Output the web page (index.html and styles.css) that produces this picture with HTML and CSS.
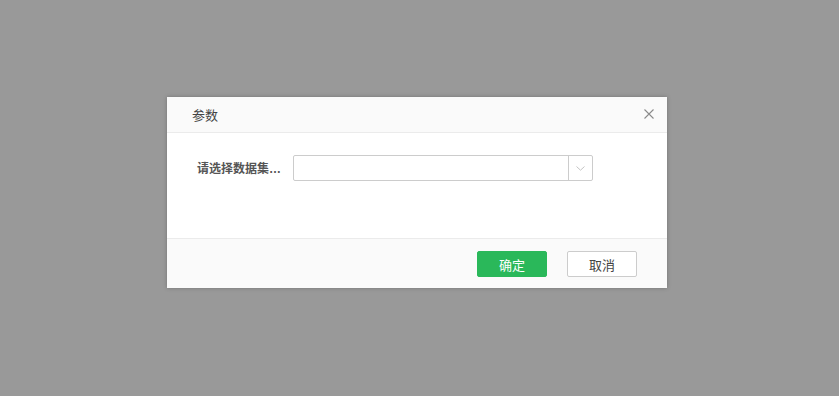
FILE: index.html
```html
<!DOCTYPE html>
<html lang="zh-CN">
<head>
<meta charset="utf-8">
<title>参数</title>
<link rel="stylesheet" href="styles.css">
</head>
<body>
<div class="overlay">
  <div class="dialog">
    <div class="dialog-header">
      <span class="dialog-title">参数</span>
      <span class="dialog-close" aria-label="关闭">
        <svg width="10" height="10" viewBox="0 0 10 10"><path d="M0.5 0.5 L9.5 9.5 M9.5 0.5 L0.5 9.5" stroke="#8a8a8a" stroke-width="1.1" fill="none"/></svg>
      </span>
    </div>
    <div class="dialog-body">
      <div class="form-row">
        <label class="form-label">请选择数据集…</label>
        <div class="select">
          <div class="select-value"></div>
          <div class="select-arrow">
            <svg width="9" height="5" viewBox="0 0 9 5"><path d="M0.5 0.5 L4.5 4.2 L8.5 0.5" stroke="#c4c4c4" stroke-width="1" fill="none"/></svg>
          </div>
        </div>
      </div>
    </div>
    <div class="dialog-footer">
      <button class="btn btn-primary">确定</button>
      <button class="btn btn-default">取消</button>
    </div>
  </div>
</div>
</body>
</html>
```
FILE: styles.css
```css
html, body {
  margin: 0;
  padding: 0;
  height: 100%;
}
body {
  background: #999999;
  font-family: "Liberation Sans", "Noto Sans CJK SC", sans-serif;
  font-size: 13px;
  color: #333;
}
.overlay {
  padding-top: 97px;
  padding-left: 167px;
}
.dialog {
  width: 500px;
  background: #fff;
  box-shadow: 0 0 4px rgba(0, 0, 0, 0.25);
}
.dialog-header {
  height: 35px;
  background: #fafafa;
  border-bottom: 1px solid #ebebeb;
  display: flex;
  align-items: center;
  justify-content: space-between;
  padding: 0 13px 0 25px;
}
.dialog-title {
  font-size: 13px;
  color: #444;
}
.dialog-close {
  display: flex;
  width: 10px;
  height: 10px;
  margin-top: -1px;
}
.dialog-body {
  height: 106px;
  padding: 22px 0 0 30px;
  box-sizing: border-box;
  border-bottom: 1px solid #ebebeb;
}
.form-row {
  display: flex;
  align-items: center;
}
.form-label {
  width: 96px;
  font-size: 12px;
  font-weight: bold;
  color: #555;
  margin-top: -2px;
}
.select {
  width: 300px;
  height: 26px;
  box-sizing: border-box;
  border: 1px solid #cccccc;
  border-radius: 2px;
  display: flex;
}
.select-value {
  flex: 1;
}
.select-arrow {
  width: 23px;
  border-left: 1px solid #cccccc;
  display: flex;
  align-items: center;
  justify-content: center;
  padding-top: 1px;
}
.dialog-footer {
  height: 49px;
  background: #fafafa;
  display: flex;
  align-items: center;
  justify-content: flex-end;
  gap: 20px;
  padding: 1px 30px 0 0;
  box-sizing: border-box;
}
.btn {
  width: 70px;
  height: 26px;
  border-radius: 2px;
  font-family: "Liberation Sans", "Noto Sans CJK SC", sans-serif;
  font-size: 13px;
  padding: 0;
  cursor: pointer;
}
.btn-primary {
  background: #2ab85a;
  border: 1px solid #2ab85a;
  color: #fff;
}
.btn-default {
  background: #fff;
  border: 1px solid #cccccc;
  color: #444;
}
```
